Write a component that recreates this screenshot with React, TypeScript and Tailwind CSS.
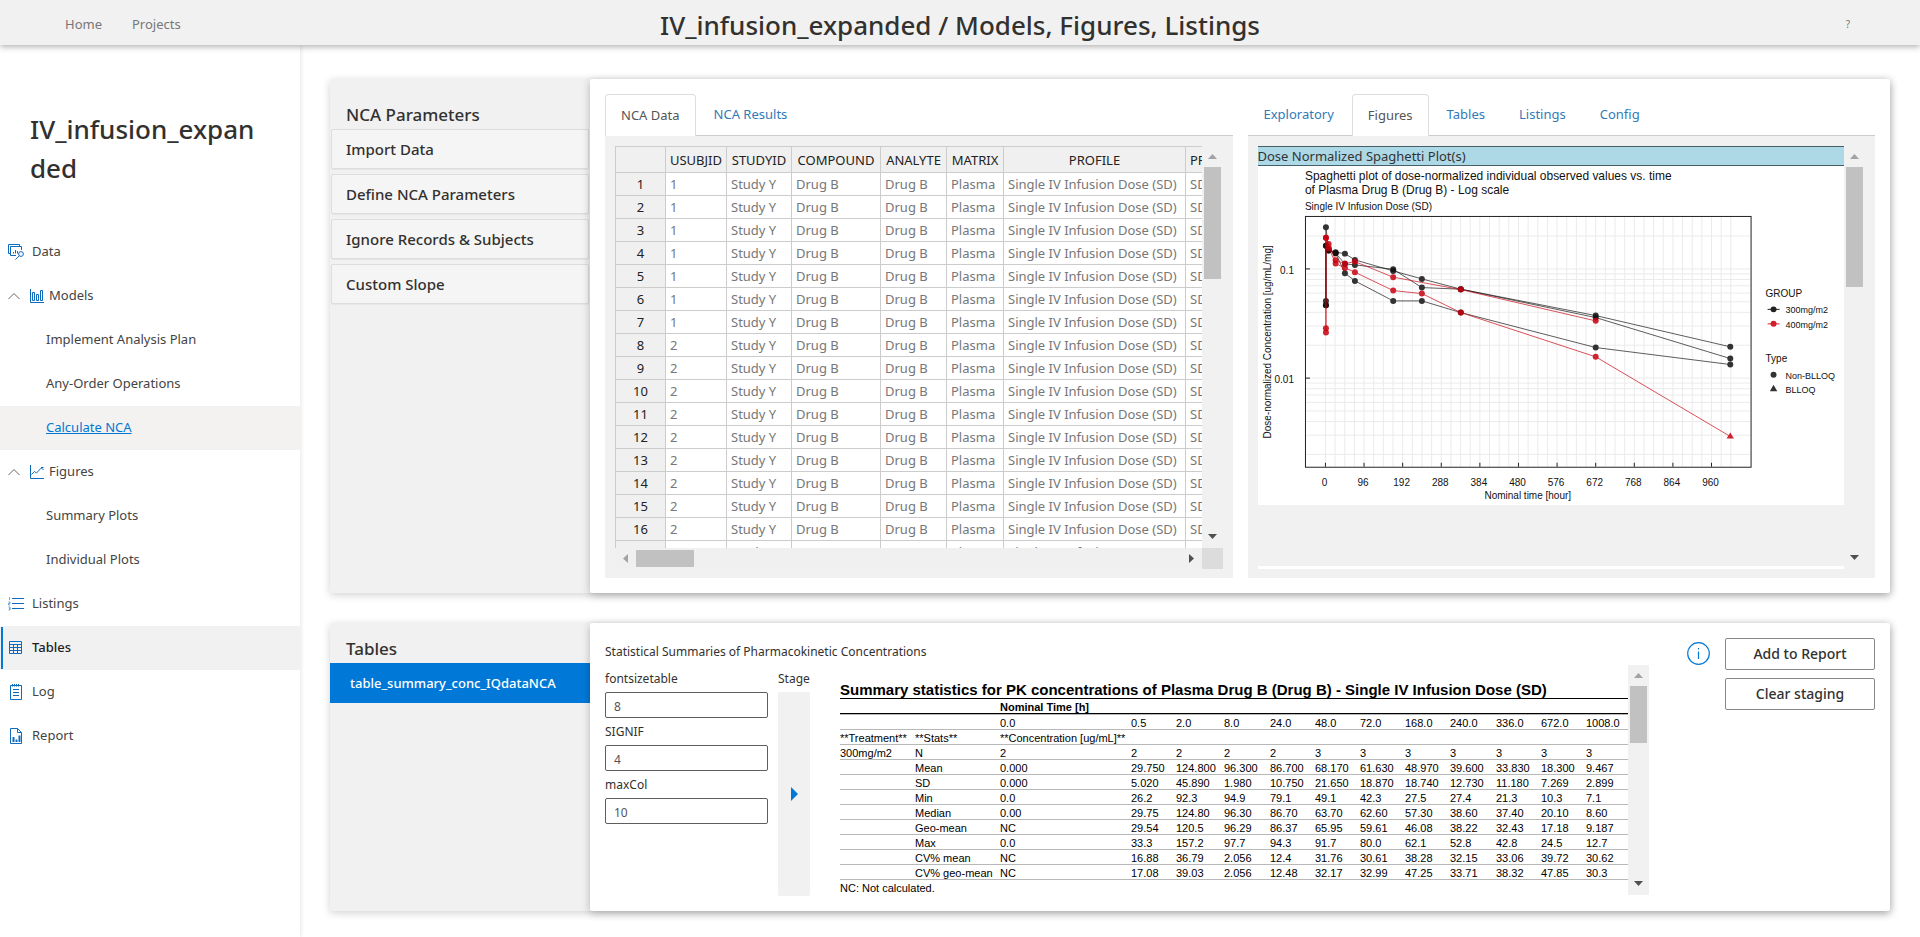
import type { ReactNode } from "react";

/* ---------- icons ---------- */

const stroke = { fill: "none", stroke: "#0f6cbd", strokeWidth: 1 } as const;

function DataIcon() {
  return (
    <svg className="h-4 w-4" viewBox="0 0 16 16" {...stroke}>
      <path d="M8 11.5H2.5V2.5h11V6M2.5 9.5h-2v-9h11v2M5.5 9.5V8M7.5 9.5V6M9.5 9.5V7" />
      <circle cx="13" cy="10" r="2.4" />
      <path d="M11.2 11.8 7.4 15.6" />
    </svg>
  );
}

function ModelsIcon() {
  return (
    <svg className="h-3.5 w-3.5" viewBox="0 0 14 14" {...stroke}>
      <path d="M.5 0v13.5H14M2.5 3.5h2v8h-2zM6.5 5.5h2v6h-2zM10.5 1.5h2v10h-2z" />
    </svg>
  );
}

function FiguresIcon() {
  return (
    <svg className="h-3.5 w-3.5" viewBox="0 0 14 14" {...stroke}>
      <path d="M.5 0v13.5H14M1.5 9.5 4.5 6.5 6.5 8l4.5-4.8h.8L13.5 5M11 2.5h2.5" />
    </svg>
  );
}

function ListingsIcon() {
  return (
    <svg className="h-4 w-4" viewBox="0 0 16 16" {...stroke}>
      <path d="M4 2.5h12M4 7.5h12M4 12.5h12" />
      <path d="M1.5 1v3M.5 6h1.5v1.5H.5V9H2M.5 11H2v3H.5M1 12.5h1" strokeWidth=".6" />
    </svg>
  );
}

function TablesIcon() {
  return (
    <svg className="h-4 w-4" viewBox="0 0 16 16" {...stroke}>
      <path d="M1.5 1.5h12v12h-12zM1.5 4.5h12M1.5 7.5h12M1.5 10.5h12M5.5 4.5v9M9.5 4.5v9" />
    </svg>
  );
}

function LogIcon() {
  return (
    <svg className="h-4 w-4" viewBox="0 0 16 16" {...stroke}>
      <path d="M2.5 1.5h11v14h-11zM4.5 0v2.5M6.5 0v2.5M8.5 0v2.5M10.5 0v2.5M5 5.5h6M5 8.5h6M5 11.5h6" />
    </svg>
  );
}

function ReportIcon() {
  return (
    <svg className="h-4 w-4" viewBox="0 0 16 16" {...stroke}>
      <path d="M2.5.5h7l4 4v11h-11zM9.5.5v4h4" />
      <path d="M5.5 14V9M8.5 14v-2.5M11.5 14V7.5" strokeWidth="2" />
    </svg>
  );
}

function Chevron() {
  return (
    <svg className="h-3 w-3" viewBox="0 0 12 12" fill="none" stroke="#666" strokeWidth="1">
      <path d="M.5 9 6 3.5 11.5 9" />
    </svg>
  );
}

/* ---------- scroll bars ---------- */

function Arrow({ d, color }: { d: string; color: string }) {
  return (
    <svg className="h-[9px] w-[9px]" viewBox="0 0 9 9">
      <path d={d} fill={color} />
    </svg>
  );
}

function VerticalBar({ thumb }: { thumb: string }) {
  return (
    <div className="flex w-[21px] shrink-0 flex-col items-center bg-[#f1f1f1]">
      <div className="flex h-[21px] items-center">
        <Arrow d="M0 7 4.5 2 9 7z" color="#a3a3a3" />
      </div>
      <div className={`w-[17px] bg-[#c1c1c1] ${thumb}`} />
      <div className="mt-auto flex h-[23px] items-center">
        <Arrow d="M0 2 4.5 7 9 2z" color="#505050" />
      </div>
    </div>
  );
}

function HorizontalBar() {
  return (
    <div className="flex h-[21px]">
      <div className="flex flex-1 items-center bg-[#f0f0f0]">
        <div className="flex w-[21px] justify-center">
          <Arrow d="M7 0 2 4.5 7 9z" color="#a3a3a3" />
        </div>
        <div className="h-[17px] w-[58px] bg-[#c1c1c1]" />
        <div className="ml-auto flex w-[21px] justify-center">
          <Arrow d="M2 0 7 4.5 2 9z" color="#505050" />
        </div>
      </div>
      <div className="w-[21px] bg-[#dcdcdc]" />
    </div>
  );
}

/* ---------- navigation ---------- */

function NavLink({ icon, chevron, children }: { icon: ReactNode; chevron?: boolean; children: ReactNode }) {
  return (
    <a href="#" className="flex h-11 items-center pl-2">
      {chevron && (
        <span className="flex w-[22px]">
          <Chevron />
        </span>
      )}
      {icon}
      <span className={chevron ? "ml-[5px]" : "ml-2"}>{children}</span>
    </a>
  );
}

function SubLink({ children, active }: { children: ReactNode; active?: boolean }) {
  return (
    <a href="#" className={`flex h-11 items-center pl-[46px] ${active ? "bg-[#f3f2f1] text-[#0078d4] underline" : ""}`}>
      {children}
    </a>
  );
}

function Sidebar() {
  return (
    <aside className="w-[300px] shrink-0 bg-white pt-[65px] shadow-[1px_0_4px_rgba(0,0,0,0.1)]">
      <h2 className="px-[30px] text-[26px] leading-[39px] font-medium break-all text-[#323130]">IV_infusion_expanded</h2>
      <nav className="mt-[42px] text-[13px] text-[#444]">
        <NavLink icon={<DataIcon />}>Data</NavLink>
        <NavLink chevron icon={<ModelsIcon />}>Models</NavLink>
        <SubLink>Implement Analysis Plan</SubLink>
        <SubLink>Any-Order Operations</SubLink>
        <SubLink active>Calculate NCA</SubLink>
        <NavLink chevron icon={<FiguresIcon />}>Figures</NavLink>
        <SubLink>Summary Plots</SubLink>
        <SubLink>Individual Plots</SubLink>
        <NavLink icon={<ListingsIcon />}>Listings</NavLink>
        <div className="relative bg-[#f1f1f1] font-medium text-[#222]">
          <NavLink icon={<TablesIcon />}>Tables</NavLink>
          <span className="absolute top-px bottom-px left-px w-0.5 bg-[#0078d7]" />
        </div>
        <NavLink icon={<LogIcon />}>Log</NavLink>
        <NavLink icon={<ReportIcon />}>Report</NavLink>
      </nav>
    </aside>
  );
}

function TabBar({ items, active }: { items: string[]; active: string }) {
  return (
    <div role="tablist" className="flex h-[42px] gap-0.5 border-b border-[#ccc]">
      {items.map((t) => (
        <button
          key={t}
          role="tab"
          aria-selected={t === active}
          className={
            t === active
              ? "-mb-px rounded-t border border-b-0 border-[#ddd] bg-white px-[15px] text-[#555]"
              : "px-4 pt-px text-[#337ab7]"
          }
        >
          {t}
        </button>
      ))}
    </div>
  );
}

/* ---------- data grid ---------- */

const gridHead = ["", "USUBJID", "STUDYID", "COMPOUND", "ANALYTE", "MATRIX", "PROFILE", "PROFTYPE"];
const gridRows = Array.from({ length: 17 }, (_, i) => [i < 7 ? "1" : "2", "Study Y", "Drug B", "Drug B", "Plasma", "Single IV Infusion Dose (SD)", "SD"]);

function DataGrid() {
  return (
    <div className="bg-[#f1f1f1] px-2.5 pt-2.5 pb-[9px]">
      <div className="flex h-[402px]">
        <div className="min-w-0 flex-1 overflow-hidden">
          <table className="w-[666px] table-fixed border-separate border-spacing-0 text-[13px] leading-[18px]">
            <colgroup>
              <col className="w-[51px]" />
              <col className="w-[61px]" />
              <col className="w-[65px]" />
              <col className="w-[89px]" />
              <col className="w-[66px]" />
              <col className="w-[57px]" />
              <col className="w-[182px]" />
              <col className="w-[95px]" />
            </colgroup>
            <thead>
              <tr>
                {gridHead.map((h, i) => (
                  <th key={i} className="h-[27px] border-y border-r border-[#ccc] bg-[#f0f0f0] p-0 font-normal text-[#222] first:border-l last:pl-1 last:text-left">
                    {h}
                  </th>
                ))}
              </tr>
            </thead>
            <tbody>
              {gridRows.map((row, i) => (
                <tr key={i}>
                  <th className="h-[23px] border-r border-b border-l border-[#ccc] bg-[#f0f0f0] p-0 font-normal text-[#222]">{i + 1}</th>
                  {row.map((c, j) => (
                    <td key={j} className="h-[23px] border-r border-b border-[#ccc] bg-white p-0 pl-1 whitespace-nowrap text-[#777]">
                      {c}
                    </td>
                  ))}
                </tr>
              ))}
            </tbody>
          </table>
        </div>
        <VerticalBar thumb="h-[112px]" />
      </div>
      <HorizontalBar />
    </div>
  );
}

/* ---------- chart ---------- */

const X0 = 67.5;
const XS = 0.4025;
const xAt = (t: number) => X0 + t * XS;
const yAt = (v: number) => 103 - (Math.log10(v) + 1) * 109.3;

const minorY = [0.2, 0.1, 0.09, 0.08, 0.07, 0.06, 0.05, 0.04, 0.03, 0.02, 0.01, 0.009, 0.008, 0.007, 0.006, 0.005, 0.004, 0.003, 0.002];
const ticksX = [0, 96, 192, 288, 384, 480, 576, 672, 768, 864, 960];

const blackSeries = [
  [[68, 135], [68, 61.3], [70.7, 84], [77.7, 86.3], [87, 87.7], [97, 94], [135.3, 105], [164, 113], [203, 123.3], [338, 149.7], [472.7, 181]],
  [[68, 139.3], [68, 79.7], [70.7, 84.5], [77.7, 87.3], [87, 98], [97, 99], [135.3, 103.3], [164, 121.7], [203, 123.3], [338, 151.7], [472.7, 192.7]],
  [[68, 139.3], [68, 79.7], [70.7, 84.5], [77.7, 87.3], [87, 107.3], [97, 115], [135.3, 135], [164, 135], [203, 146.7], [338, 181.7], [472.7, 198.7]],
];
const redSeries = [
  [[68, 162.3], [68, 71.7], [70.7, 78], [77.7, 94.3], [87, 97.7], [97, 95.7], [135.3, 111.3], [203, 123.7], [338, 155]],
  [[68, 166.7], [68, 71.7], [71, 82.3], [77.7, 97.7], [87, 102], [97, 106.3], [135.3, 124.7], [164, 127.7], [203, 146.7], [338, 191], [472.7, 270.7]],
];

function Series({ data, color, triangleEnd }: { data: number[][]; color: string; triangleEnd?: boolean }) {
  const dots = triangleEnd ? data.slice(0, -1) : data;
  const end = data[data.length - 1];
  return (
    <g fill={color} stroke="none" opacity="0.85">
      <polyline points={data.map((p) => p.join(",")).join(" ")} fill="none" stroke={color} strokeWidth="0.8" />
      {dots.map((p, i) => (
        <circle key={i} cx={p[0]} cy={p[1]} r="3" />
      ))}
      {triangleEnd && <path d={`M${end[0]} ${end[1] - 4}l3.7 6h-7.4z`} />}
    </g>
  );
}

function SpaghettiPlot() {
  return (
    <svg viewBox="0 0 587 339" className="block h-auto w-full bg-white font-['Liberation_Sans',sans-serif]" fill="#111">
      <g fontSize="12">
        <text x="47" y="14">Spaghetti plot of dose-normalized individual observed values vs. time</text>
        <text x="47" y="28">of Plasma Drug B (Drug B) - Log scale</text>
      </g>
      <g fontSize="10">
        <text x="47" y="44">Single IV Infusion Dose (SD)</text>
        <g stroke="#ebebeb">
          {Array.from({ length: 43 }, (_, i) => (
            <line key={i} x1={xAt(i * 24)} x2={xAt(i * 24)} y1="50" y2="301" />
          ))}
          {minorY.map((v) => (
            <line key={v} x1="48" x2="493" y1={yAt(v)} y2={yAt(v)} />
          ))}
        </g>
        {blackSeries.map((s, i) => (
          <Series key={i} data={s} color="#111" />
        ))}
        <Series data={redSeries[0]} color="#c8000f" />
        <Series data={redSeries[1]} color="#c8000f" triangleEnd />
        <rect x="47.5" y="50.5" width="446" height="251" fill="none" stroke="#222" />
        <g stroke="#222">
          <line x1="48" x2="52" y1={yAt(0.1)} y2={yAt(0.1)} />
          <line x1="48" x2="52" y1={yAt(0.01)} y2={yAt(0.01)} />
          {ticksX.map((t) => (
            <line key={t} x1={xAt(t)} x2={xAt(t)} y1="297" y2="301" />
          ))}
        </g>
        <text x="36" y="108" textAnchor="end">0.1</text>
        <text x="36" y="217" textAnchor="end">0.01</text>
        {ticksX.map((t) => (
          <text key={t} x={xAt(t) - 1} y="320" textAnchor="middle">{t}</text>
        ))}
        <text x="270" y="333" textAnchor="middle">Nominal time [hour]</text>
        <text transform="translate(13 176) rotate(-90)" textAnchor="middle">Dose-normalized Concentration [ug/mL/mg]</text>
        <text x="508" y="131">GROUP</text>
        <text x="508" y="196">Type</text>
      </g>
      <g fontSize="9">
        <path d="M510 143.5h12" stroke="#222" />
        <circle cx="516" cy="143.5" r="3" fill="#222" />
        <text x="528" y="147">300mg/m2</text>
        <path d="M510 158h12" stroke="#d21f2b" />
        <circle cx="516" cy="158" r="3" fill="#d21f2b" />
        <text x="528" y="162">400mg/m2</text>
        <circle cx="516" cy="209" r="3" fill="#333" />
        <text x="528" y="213">Non-BLLOQ</text>
        <path d="M516 219l3.7 6.5h-7.4z" fill="#333" />
        <text x="528" y="227">BLLOQ</text>
      </g>
    </svg>
  );
}

function FigurePane() {
  return (
    <div className="bg-[#f1f1f1] px-2.5 pt-2.5 pb-[9px]">
      <div className="flex h-[423px]">
        <div className="flex min-w-0 flex-1 flex-col overflow-hidden">
          <div className="h-5 shrink-0 border-y border-[#46606a] bg-[#add8e6] leading-[18px] text-[#333]">Dose Normalized Spaghetti Plot(s)</div>
          <SpaghettiPlot />
          <div className="mt-auto h-[3px] bg-white" />
        </div>
        <VerticalBar thumb="h-[120px]" />
      </div>
    </div>
  );
}

/* ---------- summary table ---------- */

const times = ["0.0", "0.5", "2.0", "8.0", "24.0", "48.0", "72.0", "168.0", "240.0", "336.0", "672.0", "1008.0"];
const stats: [string, string, string][] = [
  ["300mg/m2", "N", "2 2 2 2 2 3 3 3 3 3 3 3"],
  ["", "Mean", "0.000 29.750 124.800 96.300 86.700 68.170 61.630 48.970 39.600 33.830 18.300 9.467"],
  ["", "SD", "0.000 5.020 45.890 1.980 10.750 21.650 18.870 18.740 12.730 11.180 7.269 2.899"],
  ["", "Min", "0.0 26.2 92.3 94.9 79.1 49.1 42.3 27.5 27.4 21.3 10.3 7.1"],
  ["", "Median", "0.00 29.75 124.80 96.30 86.70 63.70 62.60 57.30 38.60 37.40 20.10 8.60"],
  ["", "Geo-mean", "NC 29.54 120.5 96.29 86.37 65.95 59.61 46.08 38.22 32.43 17.18 9.187"],
  ["", "Max", "0.0 33.3 157.2 97.7 94.3 91.7 80.0 62.1 52.8 42.8 24.5 12.7"],
  ["", "CV% mean", "NC 16.88 36.79 2.056 12.4 31.76 30.61 38.28 32.15 33.06 39.72 30.62"],
  ["", "CV% geo-mean", "NC 17.08 39.03 2.056 12.48 32.17 32.99 47.25 33.71 38.32 47.85 30.3"],
];

const cell = "h-[15px] border-b border-[#b8b8b8] p-0 pt-0.5";

function SummaryTable() {
  return (
    <div className="min-w-0 flex-1 overflow-hidden font-['Liberation_Sans',sans-serif] text-[11px] leading-3 text-black">
      <table className="w-full table-fixed border-separate border-spacing-0 text-left">
        <caption className="h-[34px] border-b border-black pt-[17px] text-left text-[15px] leading-4 font-bold whitespace-nowrap">
          Summary statistics for PK concentrations of Plasma Drug B (Drug B) - Single IV Infusion Dose (SD)
        </caption>
        <colgroup>
          <col className="w-[75px]" />
          <col className="w-[85px]" />
          <col className="w-[131px]" />
          <col className="w-[45px]" />
          <col className="w-12" />
          <col className="w-[46px]" />
          <col className="w-[45px]" />
          <col className="w-[45px]" />
          <col className="w-[45px]" />
          <col className="w-[45px]" />
          <col className="w-[46px]" />
          <col className="w-[45px]" />
          <col className="w-[45px]" />
          <col />
        </colgroup>
        <thead>
          <tr>
            <th colSpan={2} className="h-[15px] border-b border-black p-0" />
            <th colSpan={12} className="h-[15px] border-b border-black p-0 pt-0.5">Nominal Time [h]</th>
          </tr>
        </thead>
        <tbody>
          <tr>
            {["", "", ...times].map((t, i) => (
              <td key={i} className="h-4 border-y border-[#b8b8b8] p-0 pt-0.5">{t}</td>
            ))}
          </tr>
          <tr>
            <td className={cell}>**Treatment**</td>
            <td className={cell}>**Stats**</td>
            <td className={cell} colSpan={12}>**Concentration [ug/mL]**</td>
          </tr>
          {stats.map(([group, name, values]) => (
            <tr key={name}>
              <td className={cell}>{group}</td>
              <td className={cell}>{name}</td>
              {values.split(" ").map((v, i) => (
                <td key={i} className={cell}>{v}</td>
              ))}
            </tr>
          ))}
        </tbody>
      </table>
      <p className="pt-0.5">NC: Not calculated.</p>
    </div>
  );
}

function Field({ id, value }: { id: string; value: string }) {
  return (
    <>
      <label htmlFor={id} className="flex h-[27px] items-center">{id}</label>
      <input id={id} defaultValue={value} className="h-[26px] w-full rounded-xs border border-[#605e5c] bg-white px-2 pt-0.5 text-xs text-[#555]" />
    </>
  );
}

/* ---------- panels ---------- */

function Card({ side, children }: { side: ReactNode; children: ReactNode }) {
  return (
    <section className="flex rounded-xs bg-[#f1f1f1] shadow-[0_2px_8px_rgba(0,0,0,0.18)]">
      <div className="w-[260px] shrink-0">{side}</div>
      <div className="flex min-w-0 flex-1 gap-[15px] rounded-xs bg-white p-[15px] shadow-[0_2px_8px_rgba(0,0,0,0.25)]">{children}</div>
    </section>
  );
}

export default function App() {
  return (
    <div className="flex min-h-screen flex-col bg-white font-['Noto_Sans',sans-serif] text-[13px] text-[#323130]">
      <header className="relative z-10 grid h-[45px] grid-cols-[1fr_auto_1fr] items-center bg-[#f1f1f1] shadow-[0_2px_6px_rgba(0,0,0,0.3)]">
        <nav className="flex gap-[30px] pt-1 pl-[65px] text-[#777]">
          <a href="#">Home</a>
          <a href="#">Projects</a>
        </nav>
        <h1 className="pt-1 text-[26px] leading-10 font-medium">IV_infusion_expanded / Models, Figures, Listings</h1>
        <a href="#" className="mr-[70px] justify-self-end pt-1 text-[10px] text-[#777]">?</a>
      </header>

      <div className="flex flex-1">
        <Sidebar />
        <main className="flex min-w-0 flex-1 flex-col gap-[30px] px-[30px] pt-[34px] pb-[26px]">
          <Card
            side={
              <>
                <h3 className="pt-[22px] pl-4 text-[17px] leading-7 font-medium">NCA Parameters</h3>
                <div className="flex flex-col gap-[5px] px-px">
                  {["Import Data", "Define NCA Parameters", "Ignore Records & Subjects", "Custom Slope"].map((t) => (
                    <button key={t} className="h-10 rounded-xs border border-[#ddd] bg-[#f5f5f5] pl-3.5 text-left text-[15px] font-medium shadow-[0_1px_1px_rgba(0,0,0,0.05)]">
                      {t}
                    </button>
                  ))}
                </div>
              </>
            }
          >
            <div className="min-w-0 flex-1">
              <TabBar items={["NCA Data", "NCA Results"]} active="NCA Data" />
              <DataGrid />
            </div>
            <div className="min-w-0 flex-1">
              <TabBar items={["Exploratory", "Figures", "Tables", "Listings", "Config"]} active="Figures" />
              <FigurePane />
            </div>
          </Card>

          <Card
            side={
              <>
                <h3 className="pt-3 pl-4 text-[17px] leading-7 font-medium">Tables</h3>
                <button className="h-10 w-full bg-[#0078d7] pt-px pl-5 text-left text-[13px] font-medium text-white">table_summary_conc_IQdataNCA</button>
              </>
            }
          >
            <div className="min-w-0 flex-1 text-xs">
              <h4 className="flex h-[27px] items-center">Statistical Summaries of Pharmacokinetic Concentrations</h4>
              <div className="flex">
                <div className="w-[163px] shrink-0">
                  <Field id="fontsizetable" value="8" />
                  <Field id="SIGNIF" value="4" />
                  <Field id="maxCol" value="10" />
                </div>
                <div className="ml-2.5 flex w-8 shrink-0 flex-col">
                  <span className="flex h-[27px] items-center">Stage</span>
                  <button aria-label="Stage table" className="flex h-[204px] items-center justify-center rounded-xs bg-[#f1f1f1]">
                    <svg className="h-3.5 w-[7px]" viewBox="0 0 7 14">
                      <path d="M0 0 7 7 0 14z" fill="#0078d7" />
                    </svg>
                  </button>
                </div>
                <div className="ml-[30px] flex h-[230px] min-w-0 flex-1">
                  <SummaryTable />
                  <VerticalBar thumb="h-[57px]" />
                </div>
              </div>
            </div>
            <div className="ml-[23px] flex gap-[15px]">
              <svg className="mt-1 h-[23px] w-[23px]" viewBox="0 0 23 23" fill="none" stroke="#0078d7">
                <circle cx="11.5" cy="11.5" r="10.8" strokeWidth="1.2" />
                <path d="M11.5 9.5v7.5M11.5 6v1.5" strokeWidth="1.2" />
              </svg>
              <div className="flex w-[150px] flex-col gap-2 text-sm font-medium">
                <button className="h-8 rounded-xs border border-[#8a8886] bg-white">Add to Report</button>
                <button className="h-8 rounded-xs border border-[#8a8886] bg-white">Clear staging</button>
              </div>
            </div>
          </Card>
        </main>
      </div>
    </div>
  );
}
